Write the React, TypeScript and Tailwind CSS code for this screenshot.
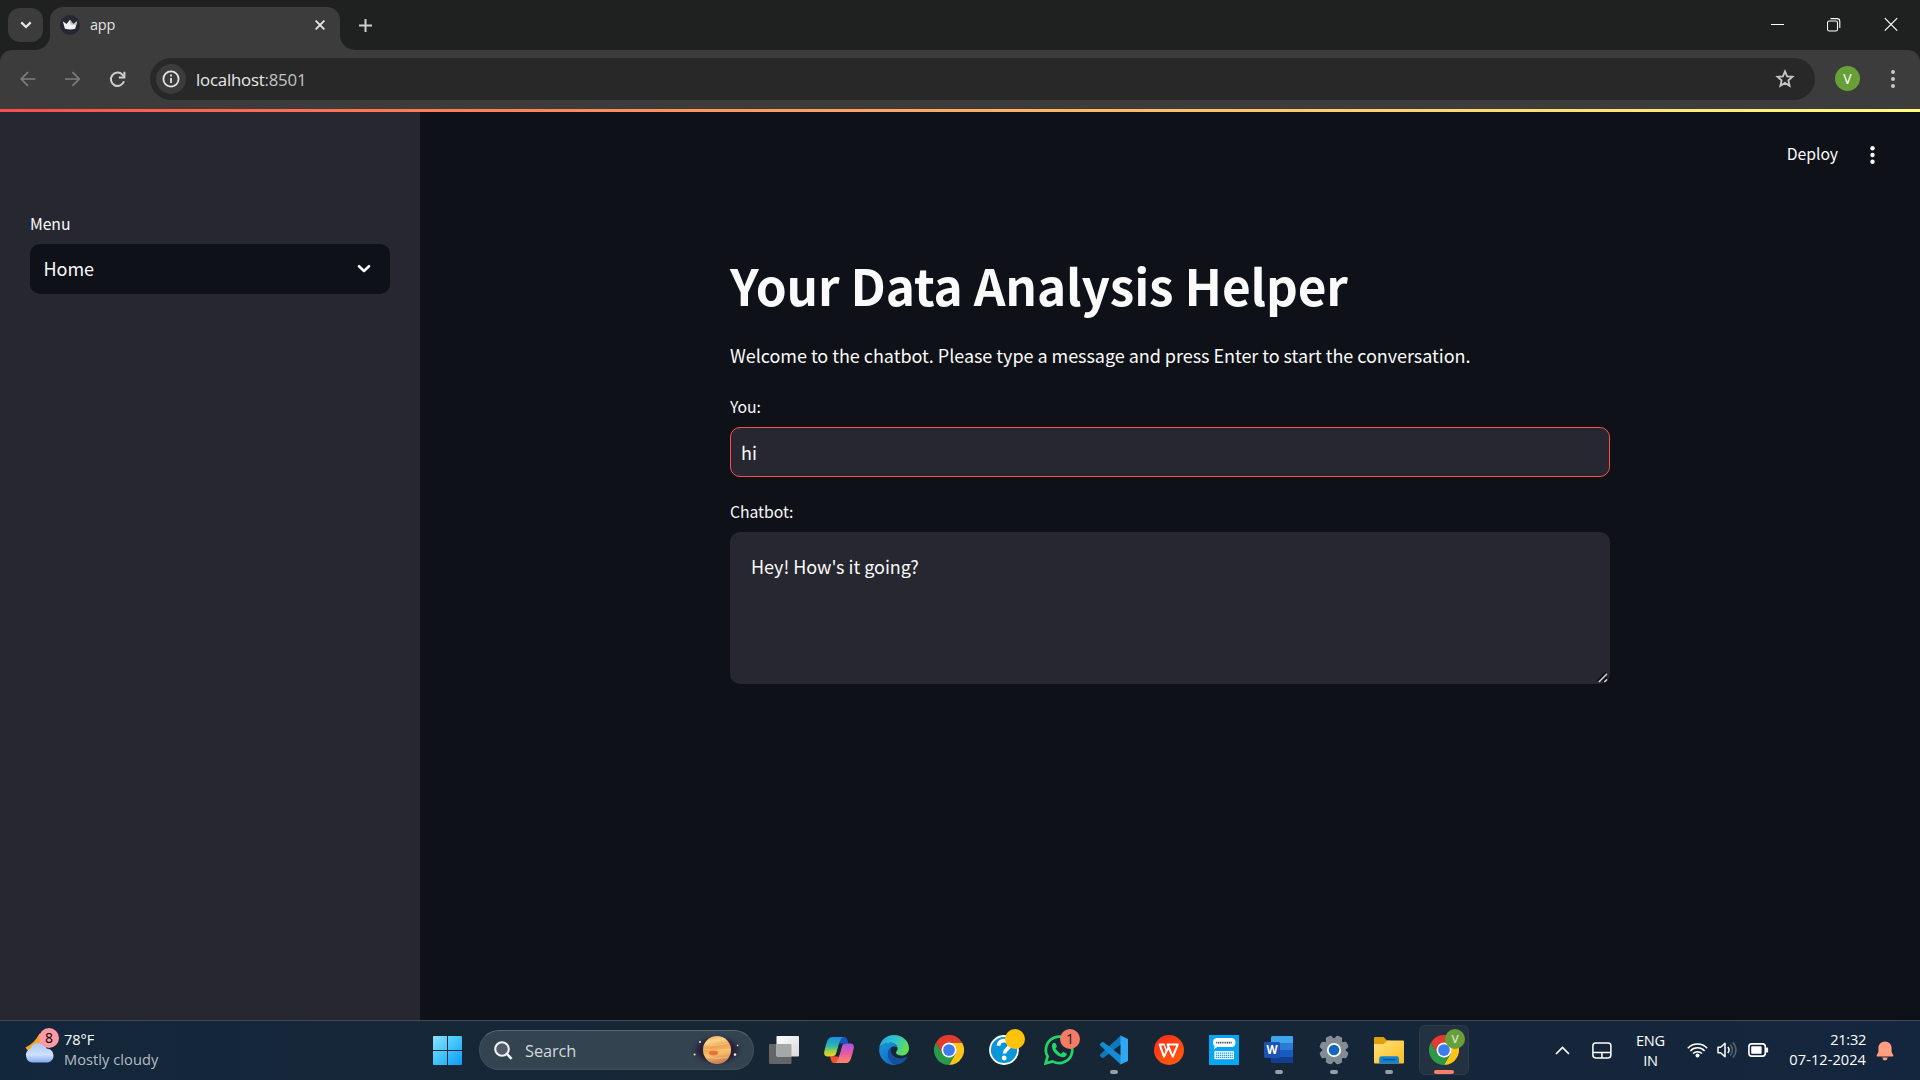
import type { ReactNode } from "react";

function Flare({ side }: { side: "left" | "right" }) {
  return (
    <svg
      className={side === "left" ? "absolute bottom-0 -left-[15px]" : "absolute -right-[15px] bottom-0 -scale-x-100"}
      width="15"
      height="15"
      viewBox="0 0 15 15"
    >
      <path d="M0 15A15 15 0 0 0 15 0V15Z" fill="#3c3c3c" />
    </svg>
  );
}

function TabStrip() {
  return (
    <div className="flex h-[50px] shrink-0 items-start bg-[#1f2120]">
      <div className="mt-2 ml-2 flex h-[34px] w-[35px] items-center justify-center rounded-[12px] bg-[#3c3c3c]">
        <svg width="12" height="8" viewBox="0 0 12 8" fill="none" stroke="#e6e6e6" strokeWidth="2.2">
          <path d="M1.3 1.4L6 6L10.7 1.4" />
        </svg>
      </div>
      <div className="relative mt-[7px] ml-[7px] flex h-[43px] w-[290px] items-start rounded-t-[13px] bg-[#3c3c3c]">
        <Flare side="left" />
        <Flare side="right" />
        <svg className="mt-2 ml-[10px] shrink-0" width="20" height="20" viewBox="0 0 20 20">
          <circle cx="10" cy="10" r="10" fill="#262730" />
          <path d="M2.8 6.2L6.6 9L9.9 4.8L13.3 9L17.2 6.2L15.2 13.8Q10 15.2 4.9 13.8Z" fill="#f2f2f2" />
          <path d="M9.9 4.8L13.3 9L17.2 6.2L16.3 9.8L10.4 9.6Z" fill="#b9b9bb" />
        </svg>
        <span className="mt-2 ml-[10px] text-[14.5px] leading-5 tracking-[-0.25px] text-[#e3e3e3]">app</span>
        <svg className="mt-[13px] mr-[15px] ml-auto" width="10" height="10" viewBox="0 0 10 10" stroke="#e6e6e6" strokeWidth="1.9">
          <path d="M0.6 0.6L9.4 9.4M9.4 0.6L0.6 9.4" />
        </svg>
      </div>
      <svg className="mt-[18.5px] ml-[19px]" width="13" height="13" viewBox="0 0 13 13" stroke="#cfcfcf" strokeWidth="2">
        <path d="M6.5 0V13M0 6.5H13" />
      </svg>
      <div className="mt-[17px] mr-[22px] ml-auto flex gap-[42px]">
        <svg width="14" height="15" viewBox="0 0 14 15" stroke="#fff" strokeWidth="1">
          <path d="M0 7.5H13" />
        </svg>
        <svg width="15" height="15" viewBox="0 0 15 15" fill="none" stroke="#fff" strokeWidth="1.1">
          <rect x="0.5" y="4" width="10" height="10" rx="1.8" />
          <path d="M3.5 1.6H10Q12.8 1.6 12.8 4.4V11" />
        </svg>
        <svg width="14" height="15" viewBox="0 0 14 15" stroke="#fff" strokeWidth="1.2">
          <path d="M0.8 1.2L13.2 13.6M13.2 1.2L0.8 13.6" />
        </svg>
      </div>
    </div>
  );
}

function Toolbar() {
  return (
    <div className="h-[59px] shrink-0 bg-[#1f2120]">
      <div className="flex h-full items-start rounded-t-[12px] bg-[#3c3c3c]">
        <svg className="mt-[21px] ml-5" width="16" height="16" viewBox="0 0 16 16" fill="none" stroke="#7d7d7d" strokeWidth="1.7">
          <path d="M15.2 8H1.4M8 1.2L1.2 8L8 14.8" />
        </svg>
        <svg className="mt-[21px] ml-[29px]" width="16" height="16" viewBox="0 0 16 16" fill="none" stroke="#7d7d7d" strokeWidth="1.7">
          <path d="M0 8H13.8M7.4 1.2L14.2 8L7.4 14.8" />
        </svg>
        <svg className="mt-[20.5px] ml-[28px]" width="17" height="17" viewBox="0 0 17 17" fill="none" stroke="#cfcfcf" strokeWidth="2">
          <path d="M15 10.2A6.7 6.7 0 1 1 13.4 3.6L15.2 5.6" />
          <path d="M15.4 0.8V6.4H9.8" />
        </svg>
        <div className="mt-2 ml-[24px] flex h-[42px] w-[1665px] items-center rounded-full bg-[#282828] pr-[20px] pl-[6px]">
          <div className="flex h-[30px] w-[30px] items-center justify-center rounded-full bg-[#3c3c3c]">
            <svg width="18" height="18" viewBox="0 0 18 18" fill="none" stroke="#e3e3e3" strokeWidth="1.8">
              <circle cx="9" cy="9" r="7.6" />
              <path d="M9 8V13M9 4.6V6.5" />
            </svg>
          </div>
          <span className="mt-px ml-[10px] text-[16.8px] leading-6 tracking-[-0.2px] text-[#e8e8e8]">
            localhost<span className="text-[#c3c3c3]">:8501</span>
          </span>
          <svg className="ml-auto" width="20" height="20" viewBox="0 0 20 20" fill="none" stroke="#c7c7c7" strokeWidth="1.8">
            <path d="M10 2.4L12.1 7.3L17.5 7.8L13.4 11.4L14.6 16.8L10 13.9L5.4 16.8L6.6 11.4L2.5 7.8L7.9 7.3Z" />
          </svg>
        </div>
        <div className="mt-4 ml-5 flex h-[25px] w-[25px] items-center justify-center rounded-full bg-[#689f38] text-[14px] leading-none text-white">
          V
        </div>
        <svg className="mt-5 ml-[30.5px]" width="4" height="18" viewBox="0 0 4 18" fill="#c7c7c7">
          <circle cx="2" cy="2.1" r="2" />
          <circle cx="2" cy="9" r="2" />
          <circle cx="2" cy="15.9" r="2" />
        </svg>
      </div>
    </div>
  );
}

function Sidebar() {
  return (
    <aside className="w-[420px] shrink-0 bg-[#262730] px-[30px] pt-[100px]">
      <div className="text-[15.75px] leading-6 tracking-[-0.08px]">Menu</div>
      <div className="mt-2 flex h-[50px] items-start rounded-[10px] bg-[#0e1117] pt-3 pr-[19px] pl-[13.5px]">
        <span className="text-[18px] leading-6 tracking-[-0.04px]">Home</span>
        <svg className="mt-2 ml-auto" width="14" height="10" viewBox="0 0 14 10" fill="none" stroke="#fafafa" strokeWidth="2.6" strokeLinecap="round" strokeLinejoin="round">
          <path d="M2 2.2L7 7L12 2.2" />
        </svg>
      </div>
    </aside>
  );
}

function Main() {
  return (
    <main className="flex grow flex-col">
      <header className="flex h-[88px] items-center justify-end pr-[45px] pb-[5px]">
        <span className="text-[15.75px] leading-6 tracking-[-0.04px]">Deploy</span>
        <svg className="mt-[2px] ml-[32px]" width="5" height="18" viewBox="0 0 5 18" fill="#fafafa">
          <circle cx="2.5" cy="2.3" r="2.2" />
          <circle cx="2.5" cy="9" r="2.2" />
          <circle cx="2.5" cy="15.7" r="2.2" />
        </svg>
      </header>
      <div className="ml-[310px] w-[880px] pt-[52px]">
        <h1 className="text-[49.5px] leading-[66px] font-bold tracking-[-0.13px]">Your Data Analysis Helper</h1>
        <p className="mt-[21px] text-[18px] leading-8 tracking-[-0.04px]">
          Welcome to the chatbot. Please type a message and press Enter to start the conversation.
        </p>
        <div className="mt-[24px] text-[15.75px] leading-6 tracking-[-0.04px]">You:</div>
        <div className="mt-2 flex h-[50px] items-center rounded-[10px] border border-[#ff4b4b] bg-[#262730] px-[10px] text-[18px] leading-6">
          hi
        </div>
        <div className="mt-[23px] text-[15.75px] leading-6 tracking-[-0.04px]">Chatbot:</div>
        <div className="relative mt-2 h-[152px] rounded-[10px] bg-[#262730] px-[21px] pt-[22px] text-[18px] leading-6 tracking-[-0.03px]">
          Hey! How's it going?
          <svg className="absolute right-[2px] bottom-[1px]" width="11" height="11" viewBox="0 0 11 11" strokeWidth="1.5">
            <path d="M0.8 9.2L9.2 0.8M6 9.6L9.6 6" stroke="#0c0d10" strokeWidth="2.4" />
            <path d="M1.8 10L10 1.8M7.4 10L10 7.4" stroke="#d6d6d6" />
          </svg>
        </div>
      </div>
    </main>
  );
}

function Slot({ children, running, active }: { children: ReactNode; running?: boolean; active?: boolean }) {
  return (
    <div className="flex w-[55px] justify-center">
      <div
        className={
          active
            ? "relative flex h-[50px] w-[50px] items-center justify-center rounded-[6px] border border-[#2c3b4a] bg-[#233141]"
            : "relative flex h-[50px] w-[50px] items-center justify-center"
        }
      >
        {children}
        {running && <span className="absolute bottom-[1px] h-1 w-2 rounded-full bg-[#969ea6]" />}
        {active && <span className="absolute bottom-0 h-1 w-5 rounded-full bg-[#f58168]" />}
      </div>
    </div>
  );
}

function ChromeIcon() {
  return (
    <svg width="30" height="30" viewBox="0 0 48 48">
      <path d="M24 12H44.8A24 24 0 0 1 24 48L34.4 30Z" fill="#fcc419" />
      <path d="M13.6 30L3.2 12A24 24 0 0 0 24 48L34.4 30Z" fill="#2a9a48" />
      <path d="M3.2 12A24 24 0 0 1 44.8 12H24L13.6 30Z" fill="#e33b2e" />
      <circle cx="24" cy="24" r="12" fill="#fff" />
      <circle cx="24" cy="24" r="9.4" fill="#3b7ded" />
    </svg>
  );
}

function CopilotIcon() {
  return (
    <svg width="30" height="28" viewBox="0 0 30 28">
      <defs>
        <linearGradient id="cpA" x1="0" y1="0" x2="0" y2="1">
          <stop offset="0" stopColor="#1b8fe8" />
          <stop offset="0.45" stopColor="#2bb6b0" />
          <stop offset="0.75" stopColor="#a7cf45" />
          <stop offset="1" stopColor="#f2d31c" />
        </linearGradient>
        <linearGradient id="cpB" x1="0" y1="0" x2="0" y2="1">
          <stop offset="0" stopColor="#a257e6" />
          <stop offset="0.5" stopColor="#e85aa4" />
          <stop offset="1" stopColor="#fb8a5c" />
        </linearGradient>
      </defs>
      <path d="M14 1H20.2Q22.4 1 23.1 3.2L24.6 7.6H20Q18 7.6 17.2 10Z" fill="#1656c4" />
      <path d="M16 27H10Q7.8 27 7.2 24.8L6 20.4H10.4Q12.3 20.4 13 18Z" fill="#f4502f" />
      <path d="M8.6 1H19.3Q17 1.6 16 5L12.4 17Q11.4 20.4 8 20.4H3.6Q-0.6 20.4 0.3 15.4Q1.4 10 3.4 4.6Q4.8 1 8.6 1Z" fill="url(#cpA)" />
      <path d="M21.4 27H10.8Q13 26.4 14 23L17.6 11Q18.6 7.6 22 7.6H26.4Q30.6 7.6 29.7 12.6Q28.6 18 26.6 23.4Q25.2 27 21.4 27Z" fill="url(#cpB)" />
      <path d="M12.6 16.4L14.6 9.2Q15.2 7.6 17 7.6H18.6L15.8 18.4Q15.2 20.4 13.4 20.4H11.2Q12 19 12.6 16.4Z" fill="#152634" />
    </svg>
  );
}

function EdgeIcon() {
  return (
    <svg width="30" height="30" viewBox="0 0 30 30">
      <defs>
        <linearGradient id="edTop" x1="0" y1="0" x2="1" y2="0.4">
          <stop offset="0" stopColor="#23a7e6" />
          <stop offset="0.55" stopColor="#2fc3cf" />
          <stop offset="1" stopColor="#63dc57" />
        </linearGradient>
        <linearGradient id="edLow" x1="0" y1="0" x2="0.6" y2="1">
          <stop offset="0" stopColor="#1a96dd" />
          <stop offset="1" stopColor="#0f6cc2" />
        </linearGradient>
      </defs>
      <path d="M0.2 13.5C0.9 5.8 7.2 0 15 0C23.4 0 30 6 30 13.2C30 17.6 26.8 20.6 22.8 20.6C19.4 20.6 17 19.2 17 17.6C17 16.6 18.6 16 18.6 13.6C18.6 10.4 15.4 7.8 11.2 7.8C6 7.8 1.6 10.6 0.2 13.5Z" fill="url(#edTop)" />
      <path d="M0.1 14.5C1.2 10.4 6 7.8 10.8 7.8C15 7.8 17.8 9.8 18.4 12.4C17.4 11.6 15.8 11.4 14.6 11.6C11 12.2 9 15.6 9 19C9 24 12.4 28.4 17.4 29.7C8 31.2 0 24 0.1 14.5Z" fill="url(#edLow)" />
      <path d="M12.4 12.6C10 14 8.8 16.6 8.8 19.2C8.8 25 13.2 29.8 18.4 29.6C22.8 28.8 26 26.2 27.8 22.8C28.2 22 27.6 21.6 27 22C24.6 23.2 22.6 23.4 20.4 23.2C15.4 22.8 11.8 19.2 11.8 15.2C11.8 14.2 12 13.4 12.4 12.6Z" fill="#14509c" />
    </svg>
  );
}

function HelpIcon() {
  return (
    <svg width="30" height="30" viewBox="0 0 30 30">
      <circle cx="15" cy="15" r="14" fill="#0a97d9" stroke="#fff" strokeWidth="1.8" />
      <path d="M9.6 10.8C9.6 7.2 12 5.6 15 5.6C18.4 5.6 20.6 7.4 20.6 10.2C20.6 14 15.4 14.2 15.4 18.6" fill="none" stroke="#fff" strokeWidth="3.8" />
      <circle cx="15.2" cy="23" r="2.4" fill="#fff" />
    </svg>
  );
}

function WhatsAppIcon() {
  return (
    <svg width="30" height="30" viewBox="0 0 30 30">
      <path d="M1.6 28.4L3.6 21.4A13.2 13.2 0 1 1 8.6 26.4Z" fill="none" stroke="#25d366" strokeWidth="2.7" />
      <path d="M10.2 7.8C9 7.8 7.8 9.4 7.9 11.6C8.2 16.6 13.4 21.8 18.6 22.3C20.8 22.4 22.6 21 22.7 19.2C22.7 18.4 22.4 18.2 19.4 16.9C18.6 16.6 18 18.6 17.2 18.9C16.4 19.1 11.6 14.8 11.6 13.6C11.6 12.8 13 12.3 12.8 11.3C11.9 8.6 11.4 7.8 10.2 7.8Z" fill="#25d366" />
    </svg>
  );
}

function VSCodeIcon() {
  return (
    <svg width="30" height="30" viewBox="0 0 30 30">
      <path d="M22 0.2L1.4 19.2Q0.2 20.4 1.4 21.4L3 22.8Q3.8 23.4 4.7 22.8L22 9.2Z" fill="#0c78bd" />
      <path d="M22 29.8L1.4 10.8Q0.2 9.7 1.4 8.6L3 7.2Q3.8 6.6 4.7 7.2L22 20.8Z" fill="#148bd2" />
      <path d="M21.5 0.4L29 4V26L21.5 29.6Z" fill="#2fa8f2" />
    </svg>
  );
}

function WpsIcon() {
  return (
    <svg width="30" height="30" viewBox="0 0 30 30">
      <defs>
        <linearGradient id="wps" x1="0" y1="0" x2="0.7" y2="1">
          <stop offset="0" stopColor="#fb2a1c" />
          <stop offset="1" stopColor="#ff5a0c" />
        </linearGradient>
      </defs>
      <circle cx="15" cy="15" r="15" fill="url(#wps)" />
      <path d="M10.6 9.4H5.6L10 21.6L14.4 12.4L18.8 21.6L23.8 9.4H13.4L16.6 16.4" fill="none" stroke="#fff" strokeWidth="2" strokeLinejoin="round" />
      <path d="M10 9.4L12.4 15.8" stroke="#fff" strokeWidth="1.5" />
    </svg>
  );
}

function TypingIcon() {
  return (
    <svg width="30" height="30" viewBox="0 0 30 30">
      <rect width="30" height="30" fill="#06a7f2" />
      <path d="M7.5 3H23Q26.4 3.4 26.4 7.4Q26.4 11.8 23 12H8.4L4.6 14.4L5.8 11.2Q4 10 4 7.4Q4 3.4 7.5 3Z" fill="#fff" />
      <path d="M7.2 7.6H23" stroke="#4d555c" strokeWidth="1.6" strokeDasharray="1.2 0.6" />
      <rect x="5.4" y="16.2" width="19.6" height="8" fill="#fff" />
      <path d="M6.8 18.2H23.8M6.8 20.3H23.8M6.8 22.4H23.8" stroke="#1d9fe0" strokeWidth="1.2" strokeDasharray="1.4 0.6" />
    </svg>
  );
}

function WordIcon() {
  return (
    <div className="relative">
      <svg width="30" height="28" viewBox="0 0 30 28">
        <path d="M8.5 0H28Q29 0 29 1V7H7V1.5Q7 0 8.5 0Z" fill="#41a5ee" />
        <path d="M7 7H29V14H7Z" fill="#2b7cd3" />
        <path d="M7 14H29V21H7Z" fill="#185abd" />
        <path d="M7 21H29V26Q29 27 28 27H8.5Q7 27 7 25.5Z" fill="#103f91" />
        <rect x="0" y="6" width="16" height="16" rx="1.4" fill="#1a52b5" />
      </svg>
      <span className="absolute top-[6px] left-0 w-4 text-center text-[11.5px] leading-4 font-bold text-white">W</span>
    </div>
  );
}

function SettingsIcon() {
  const teeth = [0, 45, 90, 135, 180, 225, 270, 315];
  return (
    <svg width="30" height="30" viewBox="0 0 30 30">
      <g fill="#838c94">
        <circle cx="15" cy="15" r="11.8" />
        {teeth.map((a) => (
          <path key={a} d="M10.6 6L11.6 1.8Q11.9 0.7 13 0.5Q15 0.2 17 0.5Q18.1 0.7 18.4 1.8L19.4 6Z" transform={`rotate(${a + 22.5} 15 15)`} />
        ))}
      </g>
      <circle cx="15" cy="15" r="6.2" fill="#1167bd" stroke="#fff" strokeWidth="1.8" />
    </svg>
  );
}

function ExplorerIcon() {
  return (
    <svg width="30" height="28" viewBox="0 0 30 28">
      <defs>
        <linearGradient id="fold" x1="0" y1="0" x2="1" y2="1">
          <stop offset="0" stopColor="#ffdf7c" />
          <stop offset="1" stopColor="#fbbf1f" />
        </linearGradient>
      </defs>
      <path d="M0 2Q0 1 1 1H9.6L13 4.6H16V10H0Z" fill="#dfa00b" />
      <path d="M0 8H9.8L13.4 4.6H29Q30 4.6 30 5.6V26.4Q30 27.4 29 27.4H1Q0 27.4 0 26.4Z" fill="url(#fold)" />
      <path d="M5.2 27.4V22.6Q5.2 20.2 7.6 20.2H22.6Q25 20.2 25 22.6V27.4Z" fill="#1382d4" />
      <path d="M9 23.6H21.4" stroke="#0a4f92" strokeWidth="1.3" />
    </svg>
  );
}

function TaskViewIcon() {
  return (
    <svg width="30" height="28" viewBox="0 0 30 28">
      <defs>
        <linearGradient id="tv" x1="0" y1="0" x2="1" y2="1">
          <stop offset="0" stopColor="#fff" />
          <stop offset="1" stopColor="#d9d9d9" />
        </linearGradient>
      </defs>
      <rect x="0" y="8" width="22.5" height="20" rx="1" fill="#636567" />
      <rect x="7.5" y="0" width="22.5" height="20.5" rx="0.8" fill="url(#tv)" />
      <path d="M7.5 8H21.5Q22.5 8 22.5 9V20.5H8.3Q7.5 20.5 7.5 19.7Z" fill="#a6a7a8" />
    </svg>
  );
}

function Planet() {
  return (
    <svg width="56" height="34" viewBox="0 0 56 34">
      <defs>
        <radialGradient id="halo" cx="0.5" cy="0.5" r="0.5">
          <stop offset="0" stopColor="#221638" />
          <stop offset="0.65" stopColor="#25203c" stopOpacity="0.9" />
          <stop offset="1" stopColor="#33424f" stopOpacity="0" />
        </radialGradient>
        <linearGradient id="jup" x1="0" y1="0" x2="0.2" y2="1">
          <stop offset="0" stopColor="#efa35e" />
          <stop offset="0.25" stopColor="#fbd489" />
          <stop offset="0.45" stopColor="#eda14f" />
          <stop offset="0.7" stopColor="#f9bf6c" />
          <stop offset="1" stopColor="#cf8350" />
        </linearGradient>
      </defs>
      <ellipse cx="28" cy="17" rx="28" ry="17" fill="url(#halo)" />
      <circle cx="28" cy="17" r="14" fill="url(#jup)" />
      <path d="M16 11Q26 14 40 10M14.6 16Q28 19 41.6 16M17 24Q28 27 39 24" fill="none" stroke="#fbe0a4" strokeWidth="1" opacity="0.45" />
      <ellipse cx="24.5" cy="20" rx="4.6" ry="2.4" fill="#ea7437" />
      <g fill="#f3e6d8">
        <circle cx="11" cy="9" r="1" />
        <circle cx="5.6" cy="21.6" r="1" />
        <circle cx="48.6" cy="12.4" r="0.8" />
        <circle cx="46" cy="21.6" r="1.3" />
      </g>
    </svg>
  );
}

function Weather() {
  return (
    <div className="flex w-[427px] items-start pt-[7px] pl-[25px]">
      <div className="relative mt-[5px] h-[32px] w-[30px]">
        <svg width="30" height="32" viewBox="0 0 30 32">
          <defs>
            <linearGradient id="cloud" x1="0" y1="0" x2="0" y2="1">
              <stop offset="0" stopColor="#a9c8f8" />
              <stop offset="0.6" stopColor="#cfe0fb" />
              <stop offset="1" stopColor="#7fa9ee" />
            </linearGradient>
          </defs>
          <path d="M14.4 0.6Q10 10 0.4 14.6Q3 19 9 19L20 12L16 2Z" fill="#f6a623" />
          <path d="M7.5 29.6A7.4 7.4 0 0 1 5.6 15.4A8.6 8.6 0 0 1 21.6 15.4A7.2 7.2 0 0 1 23 29.6Z" fill="url(#cloud)" />
        </svg>
        <span className="absolute -top-[5px] left-[14px] h-5 w-5 rounded-full bg-[#ff99a4] text-center text-[14px] leading-5 text-black">8</span>
      </div>
      <div className="mt-px ml-[9px] text-[14.6px] leading-5">
        <div className="tracking-[-0.1px] text-white">78°F</div>
        <div className="tracking-[0.06px] text-[#b6bdc4]">Mostly cloudy</div>
      </div>
    </div>
  );
}

function Tray() {
  return (
    <div className="flex grow items-start justify-end pr-[26px] text-[14.6px] leading-5 text-white">
      <svg className="mt-[25px]" width="15" height="9" viewBox="0 0 15 9" fill="none" stroke="#fff" strokeWidth="1.7">
        <path d="M1 8L7.5 1.5L14 8" />
      </svg>
      <svg className="mt-[21px] ml-[22px]" width="20" height="17" viewBox="0 0 20 17" fill="none" stroke="#fff" strokeWidth="1.5">
        <rect x="0.9" y="0.9" width="18" height="15" rx="2.8" />
        <path d="M1 10.4H19M9.9 10.4V16" />
      </svg>
      <div className="mt-[9px] ml-[23px] w-[31px] text-center tracking-[-0.25px]">
        <div>ENG</div>
        <div>IN</div>
      </div>
      <svg className="mt-[21px] ml-[21px]" width="21" height="16" viewBox="0 0 21 16" fill="none" stroke="#fff" strokeWidth="1.5">
        <path d="M0.8 6.2A13.4 13.4 0 0 1 20.2 6.2M3.4 8.9A9.8 9.8 0 0 1 17.6 8.9M6 11.6A6.2 6.2 0 0 1 15 11.6" />
        <circle cx="10.5" cy="13.6" r="2" fill="#fff" stroke="none" />
      </svg>
      <svg className="mt-[20px] ml-[9px]" width="21" height="18" viewBox="0 0 21 18" fill="none" stroke="#fff" strokeWidth="1.5">
        <path d="M1 6.2H3.6L8 2.2V15.8L3.6 11.8H1Z" strokeLinejoin="round" />
        <path d="M10.8 6A4.6 4.6 0 0 1 10.8 12" />
        <path d="M13.2 3.6A7.6 7.6 0 0 1 13.2 14.4M15.8 1.4A10.8 10.8 0 0 1 15.8 16.6" stroke="#56646f" />
      </svg>
      <svg className="mt-[22px] ml-[9.5px]" width="21" height="14" viewBox="0 0 21 14" fill="none" stroke="#fff" strokeWidth="1.6">
        <rect x="0.9" y="0.9" width="16.4" height="12.2" rx="2.8" />
        <rect x="3.2" y="3.2" width="10.4" height="7.6" rx="0.8" fill="#fff" stroke="none" />
        <path d="M19 4.6V9.4" strokeWidth="2.2" />
      </svg>
      <div className="mt-[8px] ml-[19.5px] w-[78px] text-right whitespace-nowrap">
        <div className="tracking-[-0.3px]">21:32</div>
        <div className="tracking-[0.05px]">07-12-2024</div>
      </div>
      <svg className="mt-[20px] ml-[10px]" width="18" height="20" viewBox="0 0 18 20" fill="#ff9f7f">
        <path d="M9 0.4C5 0.4 2.4 3.4 2.4 7V11L0.6 14.4Q0.4 15.4 1.4 15.4H16.6Q17.6 15.4 17.4 14.4L15.6 11V7C15.6 3.4 13 0.4 9 0.4ZM6.2 16.6Q6.8 19.4 9 19.4Q11.2 19.4 11.8 16.6Z" />
      </svg>
    </div>
  );
}

function Taskbar() {
  return (
    <div className="flex h-[60px] shrink-0 border-t border-[#434b50] bg-linear-to-r from-[#13273c] via-[#172633] via-45% to-[#14263e] font-['Open_Sans','Noto_Sans',sans-serif]">
      <Weather />
      <div className="flex items-start">
        <svg className="mt-[15px] ml-[6px]" width="29" height="29" viewBox="0 0 29 29">
          <defs>
            <linearGradient id="win" gradientUnits="userSpaceOnUse" x1="0" y1="0" x2="29" y2="29">
              <stop offset="0" stopColor="#8be2fd" />
              <stop offset="0.5" stopColor="#42c4fb" />
              <stop offset="1" stopColor="#0a9bf5" />
            </linearGradient>
          </defs>
          <path d="M0 1Q0 0 1 0H14V14H0ZM15 0H28Q29 0 29 1V14H15ZM0 15H14V29H1Q0 29 0 28ZM15 15H29V28Q29 29 28 29H15Z" fill="url(#win)" />
        </svg>
        <div className="mt-[9px] ml-[17px] flex h-10 w-[275px] items-center rounded-full border border-[#42505d] border-t-[#5a6672] bg-[#334350] pr-[8px] pl-[14px]">
          <svg width="19" height="19" viewBox="0 0 19 19" fill="none" stroke="#f0f2f3" strokeWidth="2.1">
            <circle cx="8" cy="8" r="6.8" fill="#505d69" />
            <path d="M12.8 12.8L17.6 17.8" strokeWidth="2.6" />
          </svg>
          <span className="mt-[2px] ml-[12px] text-[16.4px] leading-6 tracking-[-0.1px] text-[#d3d8dc]">Search</span>
          <div className="ml-auto">
            <Planet />
          </div>
        </div>
        <div className="mt-[4px] ml-[2.5px] flex">
          <Slot>
            <TaskViewIcon />
          </Slot>
          <Slot>
            <CopilotIcon />
          </Slot>
          <Slot>
            <EdgeIcon />
          </Slot>
          <Slot>
            <ChromeIcon />
          </Slot>
          <Slot>
            <HelpIcon />
            <span className="absolute top-[4px] right-[4px] h-5 w-5 rounded-full bg-[#ffc20a]" />
          </Slot>
          <Slot>
            <WhatsAppIcon />
            <span className="absolute top-[4px] right-[4px] h-5 w-5 rounded-full bg-[#f47c65] text-center text-[14px] leading-5 text-[#1a1a1a]">1</span>
          </Slot>
          <Slot running>
            <VSCodeIcon />
          </Slot>
          <Slot>
            <WpsIcon />
          </Slot>
          <Slot>
            <TypingIcon />
          </Slot>
          <Slot running>
            <WordIcon />
          </Slot>
          <Slot running>
            <SettingsIcon />
          </Slot>
          <Slot running>
            <ExplorerIcon />
          </Slot>
          <Slot active>
            <ChromeIcon />
            <span className="absolute top-[3px] right-[3px] h-5 w-5 rounded-full bg-[#689f38] text-center text-[11.5px] leading-5 font-semibold text-[#d5e3c8]">V</span>
          </Slot>
        </div>
      </div>
      <Tray />
    </div>
  );
}

export default function App() {
  return (
    <div className="flex h-[1080px] w-[1920px] flex-col overflow-hidden bg-[#0e1117] font-['Noto_Sans_CJK_SC',sans-serif] text-[#fafafa]">
      <div className="font-['Open_Sans','Noto_Sans',sans-serif]">
        <TabStrip />
        <Toolbar />
      </div>
      <div className="h-[3px] shrink-0 bg-linear-to-r from-[#ff4b4b] to-[#fffd80]" />
      <div className="flex min-h-0 grow">
        <Sidebar />
        <Main />
      </div>
      <Taskbar />
    </div>
  );
}
